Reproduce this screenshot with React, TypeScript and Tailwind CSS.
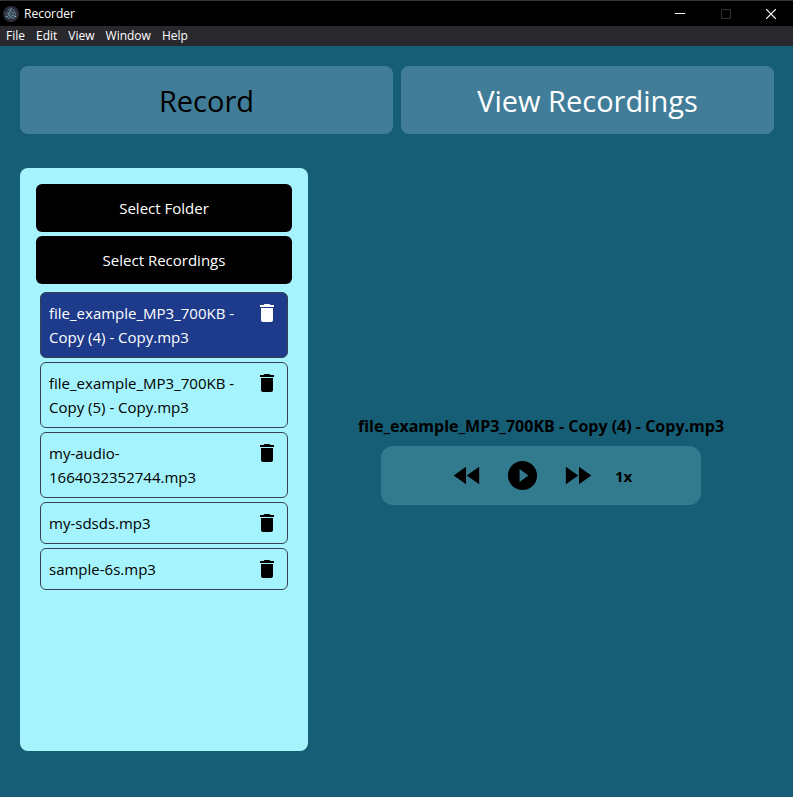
import { useState } from "react";
import { MdDelete, MdFastForward, MdFastRewind, MdPlayCircleFilled } from "react-icons/md";

const MENUS = ["File", "Edit", "View", "Window", "Help"];

const RECORDINGS = [
  "file_example_MP3_700KB - Copy (4) - Copy.mp3",
  "file_example_MP3_700KB - Copy (5) - Copy.mp3",
  "my-audio-1664032352744.mp3",
  "my-sdsds.mp3",
  "sample-6s.mp3",
];

function AppLogo() {
  return (
    <svg viewBox="0 0 32 32" className="h-4 w-4" aria-hidden="true">
      <circle cx="16" cy="16" r="16" fill="#2b2e3a" />
      <g fill="none" stroke="#9feaf9" strokeWidth="1.3" opacity="0.65">
        <ellipse cx="16" cy="16" rx="10" ry="4" strokeDasharray="15 5" />
        <ellipse cx="16" cy="16" rx="10" ry="4" strokeDasharray="15 5" transform="rotate(60 16 16)" />
        <ellipse cx="16" cy="16" rx="10" ry="4" strokeDasharray="15 5" transform="rotate(120 16 16)" />
      </g>
      <g fill="#9feaf9" opacity="0.8">
        <circle cx="16" cy="16" r="1.2" />
        <circle cx="7" cy="21" r="1.5" />
        <circle cx="25" cy="21" r="1.5" />
        <circle cx="16" cy="6" r="1.5" />
      </g>
    </svg>
  );
}

function TitleBar() {
  return (
    <header className="flex h-[26px] items-stretch justify-between border-t border-[#333638] bg-black">
      <div className="flex items-center gap-[5px] pl-[3px]">
        <AppLogo />
        <span className="text-xs text-white">Recorder</span>
      </div>
      <div className="flex text-white">
        <button aria-label="Minimize" className="flex w-[46px] items-center justify-center">
          <svg viewBox="0 0 10 10" className="h-[10px] w-[10px]">
            <path d="M0 4.5h10" stroke="currentColor" />
          </svg>
        </button>
        <button aria-label="Maximize" disabled className="flex w-[45px] items-center justify-center text-[#333333]">
          <svg viewBox="0 0 10 10" className="h-[10px] w-[10px]">
            <path d="M.5.5h9v9h-9z" fill="none" stroke="currentColor" />
          </svg>
        </button>
        <button aria-label="Close" className="flex w-[45px] items-center justify-center">
          <svg viewBox="0 0 10 10" className="h-[10px] w-[10px]">
            <path d="M0 0l10 10M10 0L0 10" stroke="currentColor" strokeWidth="1.2" />
          </svg>
        </button>
      </div>
    </header>
  );
}

function MenuBar() {
  return (
    <nav className="flex h-5 items-center gap-[11px] bg-[#29292d] px-[6px] text-xs text-white">
      {MENUS.map((menu) => (
        <button key={menu}>{menu}</button>
      ))}
    </nav>
  );
}

export default function App() {
  const [current, setCurrent] = useState(RECORDINGS[0]);

  return (
    <div className="flex min-h-screen flex-col bg-[#165e75] font-['Open_Sans','Noto_Sans',sans-serif] text-black">
      <TitleBar />
      <MenuBar />
      <main className="flex grow flex-col gap-[34px] pt-5 pr-[19px] pb-[46px] pl-5">
        <div className="grid grid-cols-2 gap-2 text-[29px] leading-9">
          <button className="rounded-lg bg-[#417d98] px-4 pt-[17px] pb-[15px]">Record</button>
          <button className="rounded-lg bg-[#417d98] px-4 pt-[17px] pb-[15px] text-white">View Recordings</button>
        </div>
        <div className="flex grow">
          <aside className="flex w-72 shrink-0 flex-col gap-1 rounded-lg bg-[#a5f3fc] p-4 text-[15px] leading-6">
            <button className="rounded-md bg-black p-3 text-white">Select Folder</button>
            <button className="rounded-md bg-black p-3 text-white">Select Recordings</button>
            <ul className="m-1 flex flex-col gap-1">
              {RECORDINGS.map((name) => (
                <li
                  key={name}
                  className={
                    name === current
                      ? "flex items-start justify-between gap-2 rounded-md border border-gray-700 bg-[#1e3a8a] p-2 text-white"
                      : "flex items-start justify-between gap-2 rounded-md border border-gray-700 p-2"
                  }
                >
                  <button className="text-left" onClick={() => setCurrent(name)}>
                    {name}
                  </button>
                  <button aria-label={`Delete ${name}`} className="shrink-0">
                    <MdDelete size={24} />
                  </button>
                </li>
              ))}
            </ul>
          </aside>
          <section className="flex grow flex-col items-center justify-center gap-2 text-base leading-6 font-bold">
            <h2>{current}</h2>
            <div className="flex w-80 items-center justify-center gap-5 rounded-xl bg-[#327b8f] p-3">
              <button aria-label="Rewind">
                <MdFastRewind size={35} />
              </button>
              <button aria-label="Play">
                <MdPlayCircleFilled size={35} />
              </button>
              <button aria-label="Fast forward">
                <MdFastForward size={35} />
              </button>
              <button aria-label="Playback speed 1x" className="text-[15px]">1x</button>
            </div>
          </section>
        </div>
      </main>
    </div>
  );
}
